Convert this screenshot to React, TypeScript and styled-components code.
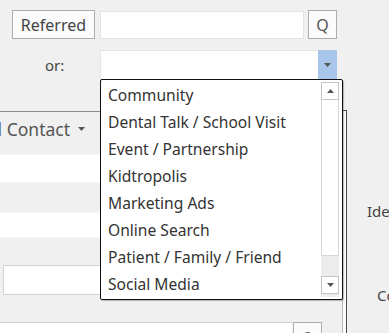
import styled, { createGlobalStyle } from 'styled-components'

const GlobalStyle = createGlobalStyle`
  html, body {
    margin: 0;
    padding: 0;
    background: #f0f0f0;
  }
  body {
    font-family: 'Noto Sans', 'Open Sans', sans-serif;
    color: #333;
  }
`

const SOURCES = [
  'Community',
  'Dental Talk / School Visit',
  'Event / Partnership',
  'Kidtropolis',
  'Marketing Ads',
  'Online Search',
  'Patient / Family / Friend',
  'Social Media',
]

const Screen = styled('div')`
  width: 389px;
  height: 333px;
  overflow: hidden;
  background: #f0f0f0;
  display: flex;
  flex-direction: column;
`

const TopForm = styled('div')`
  display: flex;
  flex-direction: column;
  gap: 11px;
  padding: 10px 0 0 0;
  height: 111px;
  flex-shrink: 0;
  box-sizing: border-box;
`

const FormRow = styled('div')`
  display: flex;
  align-items: center;
`

const PushButton = styled('div')<{ $w: number }>`
  width: ${(p) => p.$w}px;
  height: 29px;
  box-sizing: border-box;
  border: 1px solid #adadad;
  background: #fbfbfb;
  color: #444;
  font-size: 16px;
  display: flex;
  align-items: center;
  justify-content: center;
`

const ReferredButton = styled(PushButton)`
  margin-left: 12px;
  margin-right: 5px;
`

const SearchButton = styled(PushButton)`
  margin-left: 4px;
  color: #555;
`

const TextBox = styled('div')<{ $w: number }>`
  width: ${(p) => p.$w}px;
  height: 28px;
  box-sizing: border-box;
  border: 1px solid #e2e2e2;
  background: #fff;
`

const RowLabel = styled('div')`
  width: 100px;
  box-sizing: border-box;
  padding-left: 45px;
  font-size: 15px;
  color: #444;
`

const Combo = styled('div')`
  position: relative;
  width: 237px;
  height: 30px;
  box-sizing: border-box;
  border: 1px solid #e4e4e4;
  background: #fff;
  display: flex;
  justify-content: flex-end;
`

const ComboButton = styled('div')`
  width: 19px;
  height: 30px;
  margin: -1px -1px 0 0;
  background: #a8c6ea;
  display: flex;
  align-items: center;
  justify-content: center;
`

const DropList = styled('div')`
  position: absolute;
  left: -1px;
  top: 28px;
  width: 243px;
  height: 221px;
  box-sizing: border-box;
  border: 1.5px solid #111;
  border-radius: 2px;
  background: #fff;
  box-shadow: 1px 1px 1px rgba(0, 0, 0, 0.25);
  display: flex;
  padding: 2px 3px 2px 0;
  z-index: 5;
`

const Items = styled('div')`
  flex: 1;
  display: flex;
  flex-direction: column;
`

const Item = styled('div')`
  height: 27px;
  line-height: 27px;
  padding-left: 7px;
  font-size: 15.6px;
  color: #333;
  white-space: nowrap;
`

const ScrollBar = styled('div')`
  width: 18px;
  display: flex;
  flex-direction: column;
  background: #ececec;
`

const ScrollArrow = styled('div')`
  height: 18px;
  box-sizing: border-box;
  border: 1px solid #c4c4c4;
  background: #fff;
  display: flex;
  align-items: center;
  justify-content: center;
`

const ScrollThumb = styled('div')`
  height: 156px;
  box-sizing: border-box;
  border: 1px solid #d6d6d6;
  border-top: none;
  background: #fff;
`

const Body = styled('div')`
  flex: 1;
  display: flex;
`

const LeftPanel = styled('div')`
  width: 342px;
  border-top: 1px solid #8a8a8a;
  display: flex;
  flex-direction: column;
`

const GridHeader = styled('div')`
  height: 42px;
  width: 90px;
  display: flex;
  align-items: center;
  justify-content: flex-end;
  padding: 0 5px 8px 0;
  box-sizing: border-box;
  white-space: nowrap;
  font-size: 17.5px;
  color: #555;
  gap: 8px;

  svg {
    flex-shrink: 0;
  }
`

const Field = styled('div')<{ $h: number; $inset?: number; $framed?: boolean }>`
  height: ${(p) => p.$h}px;
  margin-left: ${(p) => p.$inset ?? 0}px;
  width: 300px;
  box-sizing: border-box;
  background: #fff;
  border: 1px solid ${(p) => (p.$framed ? '#d2d2d2' : '#f6f6f6')};
  border-left-width: ${(p) => (p.$inset ? 1 : 0)}px;
`

const Spacer = styled('div')<{ $h: number }>`
  height: ${(p) => p.$h}px;
  flex-shrink: 0;
`

const BottomRow = styled('div')`
  display: flex;
`

const BottomInput = styled('div')`
  width: 292px;
  height: 20px;
  box-sizing: border-box;
  border-top: 1px solid #d0d0d0;
  background: #fff;
`

const SmallButton = styled('div')`
  width: 29px;
  height: 20px;
  margin-left: 1px;
  box-sizing: border-box;
  border: 1px solid #adadad;
  border-bottom: none;
  background: #fbfbfb;
  color: #666;
  font-size: 15px;
  text-align: center;
  line-height: 26px;
`

const Divider = styled('div')`
  width: 5px;
  margin-top: -1px;
  box-sizing: border-box;
  border-left: 1px solid #b8b8b8;
  border-right: 1px solid #4a4a4a;
  border-top: 1px solid #4a4a4a;
  background: #fafafa;
`

const RightPanel = styled('div')`
  flex: 1;
  display: flex;
  flex-direction: column;
  overflow: hidden;
`

const SideLabel = styled('div')<{ $top: number; $left: number }>`
  margin-top: ${(p) => p.$top}px;
  padding-left: ${(p) => p.$left}px;
  font-size: 15px;
  color: #444;
  white-space: nowrap;
`

const Caret = ({ up }: { up?: boolean }) => (
  <svg width="7" height="4" viewBox="0 0 7 4">
    <path d={up ? 'M0 4 L3.5 0 L7 4 Z' : 'M0 0 L7 0 L3.5 4 Z'} fill="#555" />
  </svg>
)

const App = () => {
  return (
    <>
      <GlobalStyle />
      <Screen>
        <TopForm>
          <FormRow>
            <ReferredButton $w={83}>Referred</ReferredButton>
            <TextBox $w={204} />
            <SearchButton $w={29}>Q</SearchButton>
          </FormRow>
          <FormRow>
            <RowLabel>or:</RowLabel>
            <Combo>
              <ComboButton>
                <Caret />
              </ComboButton>
              <DropList>
                <Items>
                  {SOURCES.map((s) => (
                    <Item key={s}>{s}</Item>
                  ))}
                </Items>
                <ScrollBar>
                  <ScrollArrow>
                    <Caret up />
                  </ScrollArrow>
                  <ScrollThumb />
                  <Spacer $h={20} />
                  <ScrollArrow>
                    <Caret />
                  </ScrollArrow>
                </ScrollBar>
              </DropList>
            </Combo>
          </FormRow>
        </TopForm>
        <Body>
          <LeftPanel>
            <GridHeader>
              <span>Email Contact</span>
              <Caret />
            </GridHeader>
            <Field $h={29} />
            <Spacer $h={29} />
            <Field $h={26} />
            <Spacer $h={27} />
            <Field $h={30} $inset={3} $framed />
            <Spacer $h={27} />
            <BottomRow>
              <BottomInput />
              <SmallButton>Q</SmallButton>
            </BottomRow>
          </LeftPanel>
          <Divider />
          <RightPanel>
            <SideLabel $top={90} $left={20}>
              Identifier:
            </SideLabel>
            <SideLabel $top={64} $left={30}>
              Code:
            </SideLabel>
          </RightPanel>
        </Body>
      </Screen>
    </>
  )
}

export default App
